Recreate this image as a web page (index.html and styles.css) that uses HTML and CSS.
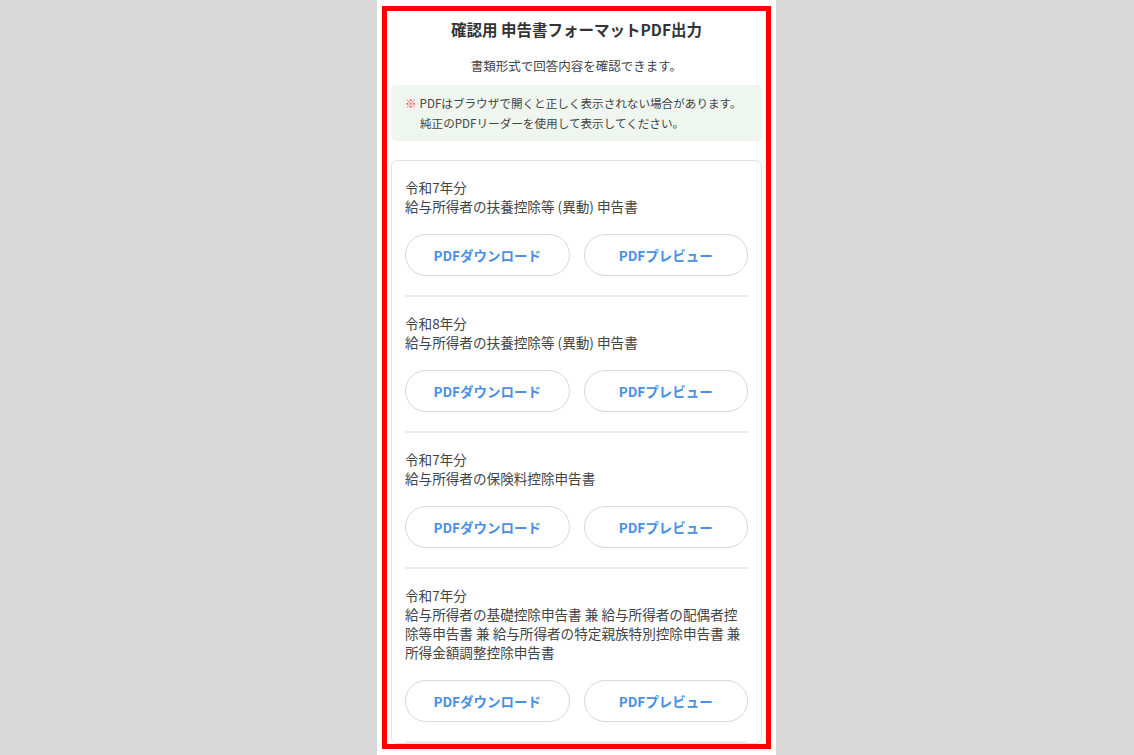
FILE: index.html
```html
<!DOCTYPE html>
<html lang="ja">
<head>
<meta charset="utf-8">
<title>確認用 申告書フォーマットPDF出力</title>
<link rel="stylesheet" href="styles.css">
</head>
<body>
<div class="stage">
  <main class="panel">
    <h1 class="title">確認用 申告書フォーマットPDF出力</h1>
    <p class="lead">書類形式で回答内容を確認できます。</p>
    <div class="notice">
      <p class="notice-line"><span class="mark">※</span>PDFはブラウザで開くと正しく表示されない場合があります。</p>
      <p class="notice-line indent">純正のPDFリーダーを使用して表示してください。</p>
    </div>
    <section class="card">
      <div class="item">
        <p class="doc">令和7年分<br>給与所得者の扶養控除等 (異動) 申告書</p>
        <div class="actions">
          <button class="btn">PDFダウンロード</button>
          <button class="btn">PDFプレビュー</button>
        </div>
      </div>
      <div class="item">
        <p class="doc">令和8年分<br>給与所得者の扶養控除等 (異動) 申告書</p>
        <div class="actions">
          <button class="btn">PDFダウンロード</button>
          <button class="btn">PDFプレビュー</button>
        </div>
      </div>
      <div class="item">
        <p class="doc">令和7年分<br>給与所得者の保険料控除申告書</p>
        <div class="actions">
          <button class="btn">PDFダウンロード</button>
          <button class="btn">PDFプレビュー</button>
        </div>
      </div>
      <div class="item">
        <p class="doc">令和7年分<br>給与所得者の基礎控除申告書 兼 給与所得者の配偶者控除等申告書 兼 給与所得者の特定親族特別控除申告書 兼 所得金額調整控除申告書</p>
        <div class="actions">
          <button class="btn">PDFダウンロード</button>
          <button class="btn">PDFプレビュー</button>
        </div>
      </div>
    </section>
  </main>
  <div class="highlight"></div>
</div>
</body>
</html>
```
FILE: styles.css
```css
* { box-sizing: border-box; }
html, body {
  margin: 0;
  padding: 0;
  height: 755px;
  overflow: hidden;
  background: #d9d9d9;
  font-family: "Noto Sans CJK JP", "Noto Sans", sans-serif;
  color: #333;
}
.stage {
  position: relative;
  height: 755px;
}
.panel {
  width: 399px;
  margin-left: 377px;
  height: 755px;
  overflow: hidden;
  background: #fff;
  padding: 0 14px;
}
.title {
  margin: 0;
  padding-top: 18px;
  font-size: 15.5px;
  line-height: 22px;
  font-weight: 700;
  text-align: center;
  color: #333;
}
.lead {
  margin: 17px 0 0;
  font-size: 12.5px;
  line-height: 18px;
  text-align: center;
  color: #444;
}
.notice {
  margin-top: 10px;
  background: #eef6ef;
  border-radius: 5px;
  padding: 8px 14px;
}
.notice-line {
  margin: 0;
  font-size: 11.6px;
  line-height: 20px;
  color: #444;
}
.notice-line.indent { padding-left: 15px; }
.mark {
  color: #e5433d;
  margin-right: 3px;
}
.card {
  margin-top: 19px;
  border: 1px solid #e2e2e2;
  border-radius: 6px;
  padding: 0 13px;
}
.item {
  padding: 17px 0 19px;
  border-bottom: 2px solid #ececec;
}
.doc {
  margin: 0;
  font-size: 13.6px;
  line-height: 19px;
  color: #444;
}
.actions {
  margin-top: 18px;
  display: grid;
  grid-template-columns: 1fr 1fr;
  gap: 14px;
}
.btn {
  height: 42px;
  border: 1px solid #d9d9d9;
  border-radius: 21px;
  background: #fff;
  color: #4a8fe6;
  font-family: "Noto Sans CJK JP", "Noto Sans", sans-serif;
  font-size: 13.5px;
  font-weight: 700;
  padding: 0;
}
.highlight {
  position: absolute;
  left: 382px;
  top: 6px;
  width: 389px;
  height: 743px;
  border: 5px solid #ff0000;
  pointer-events: none;
}
```
